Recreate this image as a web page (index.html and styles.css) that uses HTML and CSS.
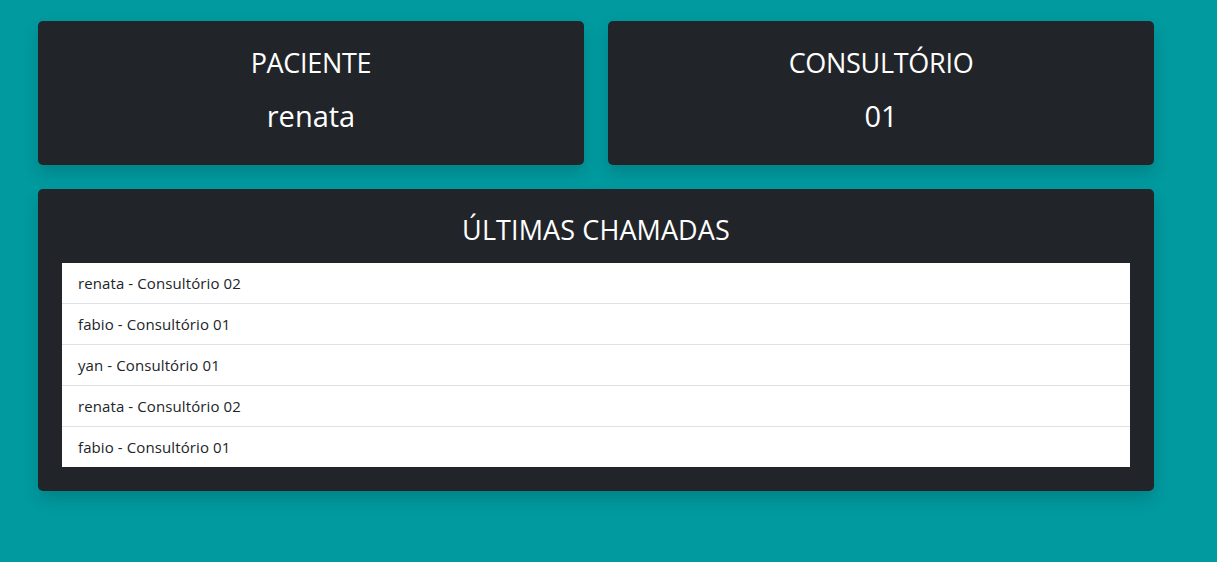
FILE: index.html
```html
<!DOCTYPE html>
<html lang="pt-BR">
<head>
<meta charset="utf-8">
<title>Painel de chamadas</title>
<link rel="stylesheet" href="styles.css">
</head>
<body>
<main class="page">
  <div class="top-row">
    <section class="card card-info">
      <h3 class="card-title">PACIENTE</h3>
      <h2 class="card-value">renata</h2>
    </section>
    <section class="card card-info">
      <h3 class="card-title">CONSULTÓRIO</h3>
      <h2 class="card-value">01</h2>
    </section>
  </div>
  <section class="card card-history">
    <h3 class="card-title history-title">ÚLTIMAS CHAMADAS</h3>
    <ul class="call-list">
      <li class="call-item">renata - Consultório 02</li>
      <li class="call-item">fabio - Consultório 01</li>
      <li class="call-item">yan - Consultório 01</li>
      <li class="call-item">renata - Consultório 02</li>
      <li class="call-item">fabio - Consultório 01</li>
    </ul>
  </section>
</main>
</body>
</html>
```

FILE: styles.css
```css
* { box-sizing: border-box; }

html, body {
  margin: 0;
  padding: 0;
  height: 100%;
}

body {
  background: #009a9f;
  font-family: "Open Sans", "Noto Sans", "Liberation Sans", sans-serif;
  color: #212529;
}

.page {
  width: 1116px;
  margin-left: 38px;
  padding-top: 21px;
  display: flex;
  flex-direction: column;
  gap: 24px;
}

.top-row {
  display: grid;
  grid-template-columns: 1fr 1fr;
  gap: 24px;
}

.card {
  background: #212529;
  border-radius: 5px;
  box-shadow: 0 8px 16px rgba(0, 0, 0, 0.15);
  color: #fff;
}

.card-info {
  height: 144px;
  padding-top: 25px;
  text-align: center;
}

.card-title {
  margin: 0;
  font-weight: 400;
  font-size: 27px;
  line-height: 33px;
  letter-spacing: -0.3px;
}

.card-value {
  margin: 18px 0 0;
  font-weight: 400;
  font-size: 29px;
  line-height: 38px;
}

.card-history {
  padding: 24px;
}

.history-title {
  text-align: center;
  margin-bottom: 17px;
  letter-spacing: 0.1px;
}

.call-list {
  list-style: none;
  margin: 0;
  padding: 0;
  background: #fff;
}

.call-item {
  padding: 8px 16px;
  font-size: 15px;
  line-height: 24px;
  height: 41px;
  border-top: 1px solid #dee2e6;
  letter-spacing: 0.1px;
  color: #212529;
}

.call-item:first-child {
  border-top: 0;
  height: 40px;
}
```
